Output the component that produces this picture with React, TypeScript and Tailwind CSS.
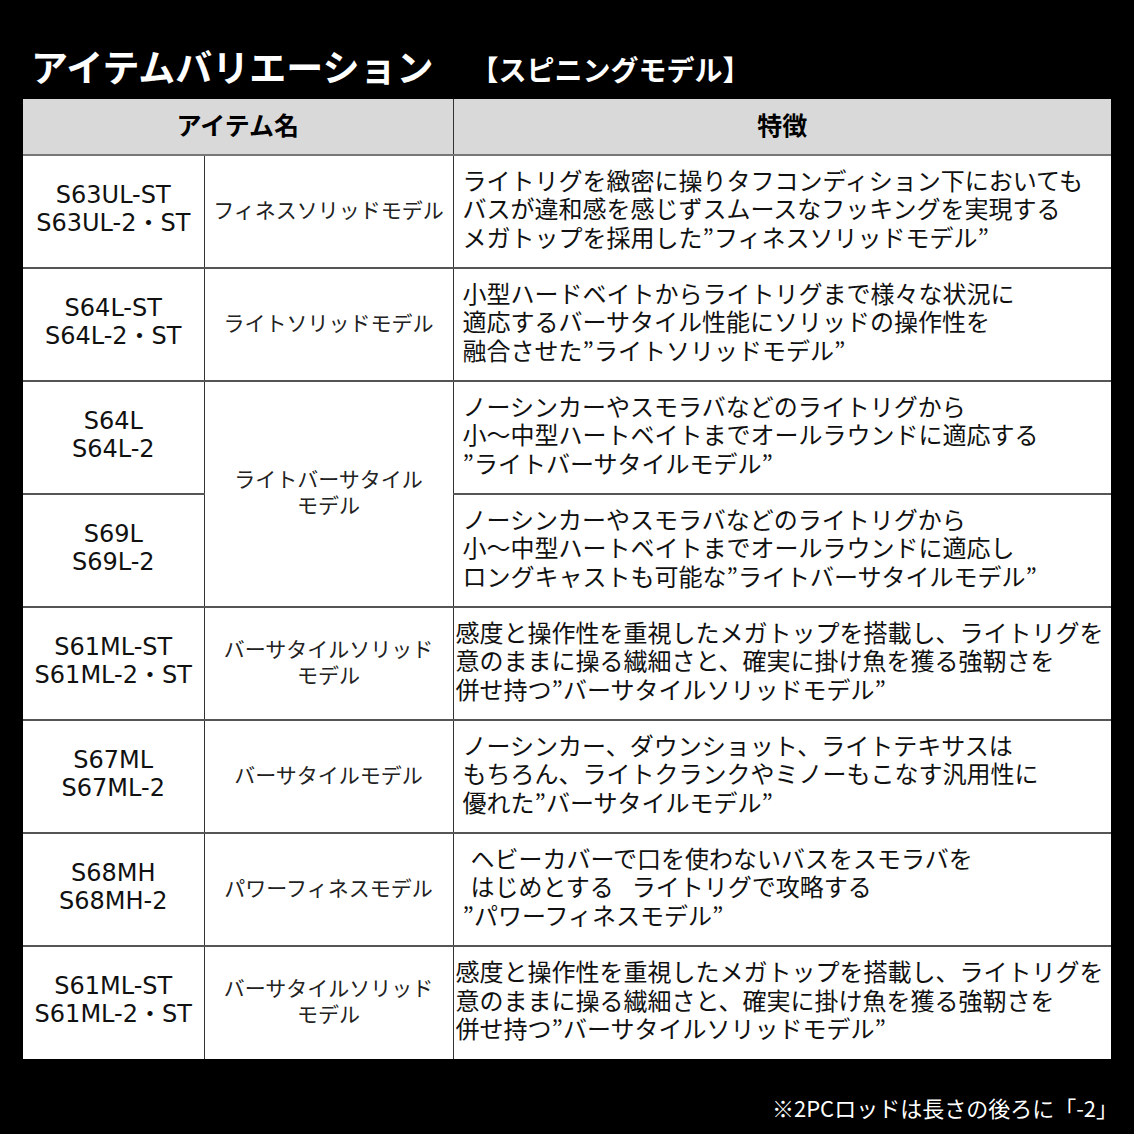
import React from "react";

type Row = {
  codes: string[];
  name?: string[];
  nameSpan?: number;
  desc: string[];
  pad: string;
  indent?: number[];
};

const rows: Row[] = [
  {
    codes: ["S63UL-ST", "S63UL-2・ST"],
    name: ["フィネスソリッドモデル"],
    desc: [
      "ライトリグを緻密に操りタフコンディション下においても",
      "バスが違和感を感じずスムースなフッキングを実現する",
      "メガトップを採用した”フィネスソリッドモデル”",
    ],
    pad: "pl-[9px]",
  },
  {
    codes: ["S64L-ST", "S64L-2・ST"],
    name: ["ライトソリッドモデル"],
    desc: [
      "小型ハードベイトからライトリグまで様々な状況に",
      "適応するバーサタイル性能にソリッドの操作性を",
      "融合させた”ライトソリッドモデル”",
    ],
    pad: "pl-[9px]",
  },
  {
    codes: ["S64L", "S64L-2"],
    name: ["ライトバーサタイル", "モデル"],
    nameSpan: 2,
    desc: [
      "ノーシンカーやスモラバなどのライトリグから",
      "小～中型ハートベイトまでオールラウンドに適応する",
      "”ライトバーサタイルモデル”",
    ],
    pad: "pl-[9px]",
  },
  {
    codes: ["S69L", "S69L-2"],
    desc: [
      "ノーシンカーやスモラバなどのライトリグから",
      "小～中型ハートベイトまでオールラウンドに適応し",
      "ロングキャストも可能な”ライトバーサタイルモデル”",
    ],
    pad: "pl-[9px]",
  },
  {
    codes: ["S61ML-ST", "S61ML-2・ST"],
    name: ["バーサタイルソリッド", "モデル"],
    desc: [
      "感度と操作性を重視したメガトップを搭載し、ライトリグを",
      "意のままに操る繊細さと、確実に掛け魚を獲る強靭さを",
      "併せ持つ”バーサタイルソリッドモデル”",
    ],
    pad: "pl-[2px]",
  },
  {
    codes: ["S67ML", "S67ML-2"],
    name: ["バーサタイルモデル"],
    desc: [
      "ノーシンカー、ダウンショット、ライトテキサスは",
      "もちろん、ライトクランクやミノーもこなす汎用性に",
      "優れた”バーサタイルモデル”",
    ],
    pad: "pl-[9px]",
  },
  {
    codes: ["S68MH", "S68MH-2"],
    name: ["パワーフィネスモデル"],
    desc: [
      "ヘビーカバーで口を使わないバスをスモラバを",
      "はじめとする|ライトリグで攻略する",
      "”パワーフィネスモデル”",
    ],
    pad: "pl-[9px]",
    indent: [0, 1],
  },
  {
    codes: ["S61ML-ST", "S61ML-2・ST"],
    name: ["バーサタイルソリッド", "モデル"],
    desc: [
      "感度と操作性を重視したメガトップを搭載し、ライトリグを",
      "意のままに操る繊細さと、確実に掛け魚を獲る強靭さを",
      "併せ持つ”バーサタイルソリッドモデル”",
    ],
    pad: "pl-[2px]",
  },
];

const jp = "font-['Noto_Sans_CJK_JP',sans-serif]";

function Line({ text }: { text: string }) {
  const pieces = text.split("|");
  return (
    <>
      {pieces.map((p, i) => (
        <React.Fragment key={i}>
          {i > 0 && <span className="inline-block w-[18px]" />}
          {p}
        </React.Fragment>
      ))}
    </>
  );
}

export default function App() {
  return (
    <div className={`w-[1134px] h-[1134px] bg-black overflow-hidden ${jp}`}>
      <div className="flex items-end pl-[31px] pt-[44px] h-[99px] pb-[14px]">
        <div className="text-white text-[37px] font-bold leading-[37px]">
          アイテムバリエーション
        </div>
        <div className="text-white text-[28px] font-bold leading-[30px] ml-[37px] mb-[1px]">
          【スピニングモデル】
        </div>
      </div>
      <div className="pl-[23px]">
        <table className="w-[1088px] table-fixed border-collapse bg-white text-black">
          <colgroup>
            <col className="w-[181px]" />
            <col className="w-[249px]" />
            <col className="w-[658px]" />
          </colgroup>
          <thead>
            <tr className="h-[56px] bg-[#d9d9d9]">
              <th
                colSpan={2}
                className="border-r border-r-[#333] border-b-2 border-b-[#777] text-[25px] font-bold text-center align-middle pb-[4px]"
              >
                アイテム名
              </th>
              <th className="border-b-2 border-b-[#777] text-[25px] font-bold text-center align-middle pb-[4px]">
                特徴
              </th>
            </tr>
          </thead>
          <tbody>
            {rows.map((r, i) => (
              <tr
                key={i}
                className={`h-[113px] ${i < rows.length - 1 ? "border-b-2 border-b-[#555]" : ""}`}
              >
                <td className="border-r border-r-[#333] text-center align-middle pb-[6px]">
                  {r.codes.map((c, j) => (
                    <div
                      key={j}
                      className="font-['DejaVu_Sans','Noto_Sans_CJK_JP',sans-serif] text-[24px] leading-[28px] whitespace-nowrap text-[#111]"
                    >
                      {c}
                    </div>
                  ))}
                </td>
                {r.name && (
                  <td
                    rowSpan={r.nameSpan ?? 1}
                    className="border-r border-r-[#333] text-center align-middle pb-[6px]"
                  >
                    {r.name.map((n, j) => (
                      <div
                        key={j}
                        className="text-[21px] leading-[26px] whitespace-nowrap text-[#222]"
                      >
                        {n}
                      </div>
                    ))}
                  </td>
                )}
                <td className={`align-middle text-left pb-[6px] ${r.pad}`}>
                  {r.desc.map((d, j) => (
                    <div
                      key={j}
                      className={`text-[24px] leading-[28.5px] whitespace-nowrap text-[#111] ${
                        r.indent && r.indent.includes(j) ? "pl-[8px]" : ""
                      }`}
                    >
                      <Line text={d} />
                    </div>
                  ))}
                </td>
              </tr>
            ))}
          </tbody>
        </table>
      </div>
      <div className="flex justify-end pr-[16px] pt-[34px]">
        <div className="text-white text-[22px] leading-[28px] whitespace-nowrap">
          ※2PCロッドは長さの後ろに「-2」
        </div>
      </div>
    </div>
  );
}
